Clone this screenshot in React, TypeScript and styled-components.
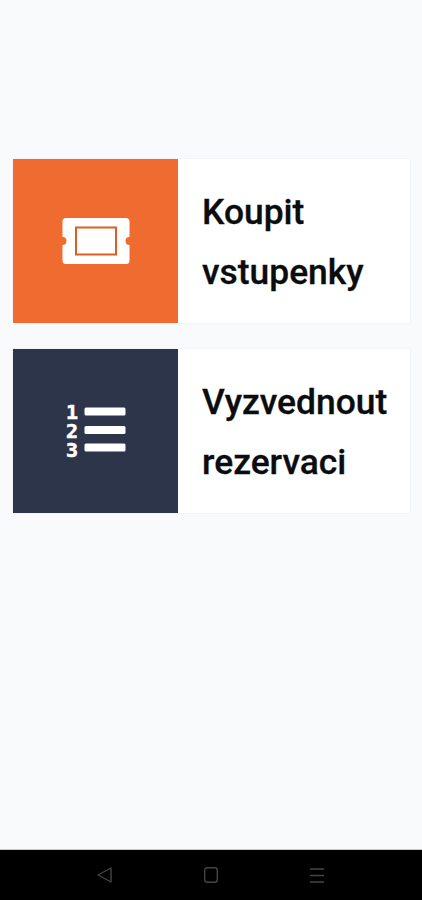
import React from "react";
import styled, { createGlobalStyle } from "styled-components";

const Global = createGlobalStyle`
  html, body { margin: 0; padding: 0; background: #f9fafc; }
  body { font-family: Roboto, "Liberation Sans", sans-serif; }
`;

const Screen = styled.div`
  width: 422px;
  height: 900px;
  display: flex;
  flex-direction: column;
  overflow: hidden;
  background: #f9fafc;
`;

const Content = styled.main`
  flex: 1;
  display: flex;
  flex-direction: column;
  gap: 26px;
  padding: 159px 12px 0 13px;
`;

const Card = styled.a`
  display: flex;
  height: 164px;
  background: #ffffff;
  box-shadow: 0 0 2px rgba(30, 40, 70, 0.08);
  color: #0b0c0e;
  text-decoration: none;
`;

const Tile = styled.div<{ $color: string }>`
  width: 165px;
  flex: none;
  display: flex;
  align-items: center;
  justify-content: center;
  background: ${(p) => p.$color};
`;

const Label = styled.div`
  flex: 1;
  display: flex;
  flex-direction: column;
  justify-content: center;
  padding: 1px 0 0 24px;
  font-size: 35.4px;
  font-weight: 500;
  line-height: 60px;
  -webkit-text-stroke: 0.3px #0b0c0e;
`;

const NavBar = styled.nav`
  height: 51px;
  flex: none;
  display: flex;
  align-items: center;
  justify-content: space-between;
  padding: 0 98px 0 97px;
  background: #000000;
  border-top: 1px solid #c9c9c9;
  box-sizing: border-box;
`;

const TicketIcon = () => (
  <svg width="68" height="46" viewBox="0 0 68 46" aria-hidden="true">
    <path
      fill="#ffffff"
      d="M4 0H64A3.500 3.500 0 0 1 67.500 3.500V19A4 4 0 0 0 67.500 27V42.500A3.500 3.500 0 0 1 64 46H4A3.500 3.500 0 0 1 .5 42.500V27A4 4 0 0 0 .5 19V3.500A3.500 3.500 0 0 1 4 0Z"
    />
    <rect x="14" y="9.500" width="40" height="27" fill="#ffffff" stroke="#e05c22" strokeWidth="2" />
  </svg>
);

const ListIcon = () => (
  <svg width="66" height="64" viewBox="-2 -5 66 64" aria-hidden="true">
    <g
      fill="#ffffff"
      stroke="#ffffff"
      strokeWidth="0.6"
      fontFamily="'DejaVu Sans Mono', monospace"
      fontWeight="700"
      fontSize="20"
      textAnchor="middle"
    >
      <text x="7" y="15">1</text>
      <text x="7" y="34">2</text>
      <text x="7" y="53">3</text>
    </g>
    <rect x="19.500" y="3.500" width="41" height="8" rx="1.500" fill="#ffffff" />
    <rect x="19.500" y="22" width="41" height="8" rx="1.500" fill="#ffffff" />
    <rect x="19.500" y="39.500" width="41" height="8" rx="1.500" fill="#ffffff" />
  </svg>
);

const BackIcon = () => (
  <svg width="15" height="16" viewBox="0 0 15 16" fill="none" stroke="#454545" strokeWidth="1.400" aria-hidden="true">
    <path d="M14 1V15L1 8Z" strokeLinejoin="round" />
  </svg>
);

const HomeIcon = () => (
  <svg width="14" height="16" viewBox="0 0 14 16" fill="none" stroke="#454545" strokeWidth="1.400" aria-hidden="true">
    <rect x="0.700" y="0.700" width="12.600" height="14.600" rx="2.500" />
  </svg>
);

const MenuIcon = () => (
  <svg width="14" height="16" viewBox="0 0 14 16" fill="none" stroke="#454545" strokeWidth="1.500" aria-hidden="true">
    <path d="M0 2H14M0 8.500H14M0 15H14" />
  </svg>
);

export default function App() {
  return (
    <Screen>
      <Global />
      <Content>
        <Card>
          <Tile $color="#f06b30">
            <TicketIcon />
          </Tile>
          <Label>
            <span>Koupit</span>
            <span>vstupenky</span>
          </Label>
        </Card>
        <Card>
          <Tile $color="#2c3549">
            <ListIcon />
          </Tile>
          <Label>
            <span>Vyzvednout</span>
            <span>rezervaci</span>
          </Label>
        </Card>
      </Content>
      <NavBar>
        <BackIcon />
        <HomeIcon />
        <MenuIcon />
      </NavBar>
    </Screen>
  );
}
